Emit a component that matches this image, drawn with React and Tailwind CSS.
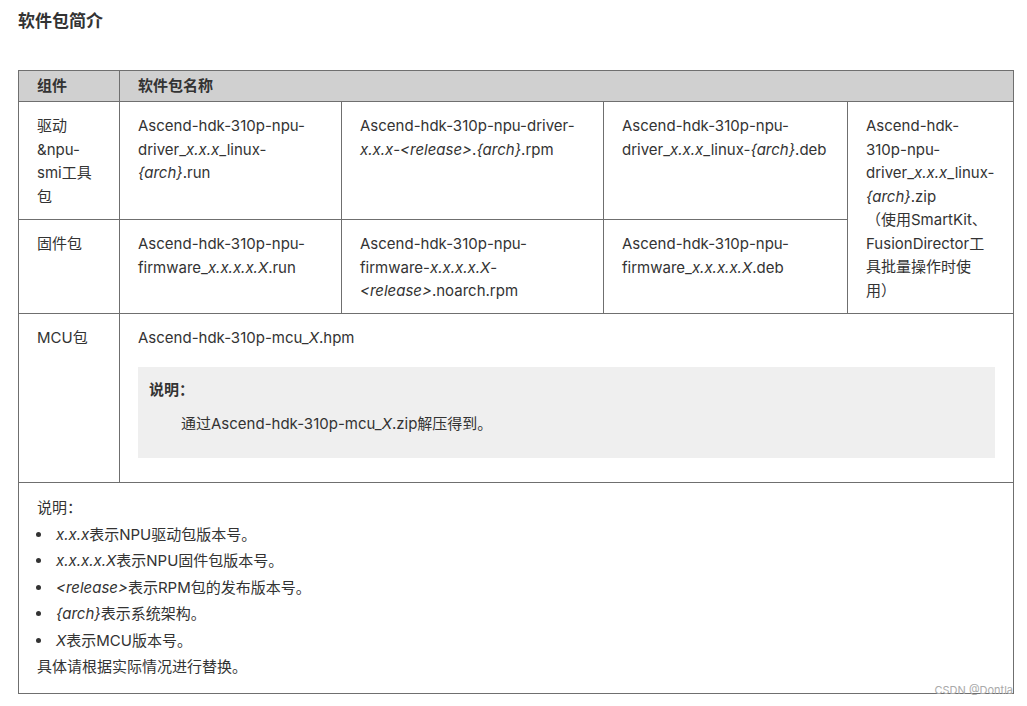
import React from 'react';

const font = { fontFamily: 'Inter, "Noto Sans CJK SC", sans-serif' };

const I = ({ children }) => <i className="italic">{children}</i>;

const Cell = ({ children, className = '', ...rest }) => (
  <td className={`border border-[#6f6f6f] align-top px-[18px] pt-[12px] pb-[10px] ${className}`} {...rest}>
    {children}
  </td>
);

export default function App() {
  return (
    <div className="bg-white w-[1027px] h-[706px] relative text-[#333] text-[15px] leading-[23.5px]" style={font}>
      <h3 className="pl-[18px] pt-[9px] text-[17px] font-bold leading-[24px] text-[#333]">软件包简介</h3>

      <table className="ml-[18px] mt-[37px] w-[995px] table-fixed border-collapse">
        <colgroup>
          <col className="w-[101px]" />
          <col className="w-[222px]" />
          <col className="w-[262px]" />
          <col className="w-[244px]" />
          <col className="w-[166px]" />
        </colgroup>
        <thead>
          <tr className="bg-[#d0d0d0] h-[31px]">
            <th className="border border-[#6f6f6f] px-[18px] text-left font-bold align-middle">组件</th>
            <th colSpan={4} className="border border-[#6f6f6f] px-[18px] text-left font-bold align-middle">软件包名称</th>
          </tr>
        </thead>
        <tbody>
          <tr className="h-[118px]">
            <Cell>驱动<br />&amp;npu-<br />smi工具<br />包</Cell>
            <Cell>Ascend-hdk-310p-npu-<br />driver_<I>x.x.x</I>_linux-<br /><I>{'{arch}'}</I>.run</Cell>
            <Cell>Ascend-hdk-310p-npu-driver-<br /><I>x.x.x</I>-<I>&lt;release&gt;</I>.<I>{'{arch}'}</I>.rpm</Cell>
            <Cell>Ascend-hdk-310p-npu-<br />driver_<I>x.x.x</I>_linux-<I>{'{arch}'}</I>.deb</Cell>
            <Cell rowSpan={2}>
              Ascend-hdk-<br />310p-npu-<br />driver_<I>x.x.x</I>_linux-<br /><I>{'{arch}'}</I>.zip<br />
              （使用SmartKit、<br />FusionDirector工<br />具批量操作时使<br />用）
            </Cell>
          </tr>
          <tr className="h-[94px]">
            <Cell>固件包</Cell>
            <Cell>Ascend-hdk-310p-npu-<br />firmware_<I>x.x.x.x.X</I>.run</Cell>
            <Cell>Ascend-hdk-310p-npu-<br />firmware-<I>x.x.x.x.X</I>-<br /><I>&lt;release&gt;</I>.noarch.rpm</Cell>
            <Cell>Ascend-hdk-310p-npu-<br />firmware_<I>x.x.x.x.X</I>.deb</Cell>
          </tr>
          <tr className="h-[169px]">
            <Cell>MCU包</Cell>
            <Cell colSpan={4}>
              <p>Ascend-hdk-310p-mcu_<I>X</I>.hpm</p>
              <div className="mt-[17px] bg-[#efefef] px-[11px] pt-[11px] pb-[22px]">
                <p className="font-bold">说明：</p>
                <p className="mt-[11px] pl-[32px]">通过Ascend-hdk-310p-mcu_<I>X</I>.zip解压得到。</p>
              </div>
            </Cell>
          </tr>
          <tr className="h-[211px]">
            <td colSpan={5} className="border border-[#6f6f6f] align-top px-[18px] pt-[12px]">
              <p className="leading-[26.5px]">说明：</p>
              <ul className="list-disc pl-[16px] marker:text-[#333] leading-[26.5px]">
                <li className="pl-[3px]"><I>x.x.x</I>表示NPU驱动包版本号。</li>
                <li className="pl-[3px]"><I>x.x.x.x.X</I>表示NPU固件包版本号。</li>
                <li className="pl-[3px]"><I>&lt;release&gt;</I>表示RPM包的发布版本号。</li>
                <li className="pl-[3px]"><I>{'{arch}'}</I>表示系统架构。</li>
                <li className="pl-[3px]"><I>X</I>表示MCU版本号。</li>
              </ul>
              <p className="leading-[26.5px]">具体请根据实际情况进行替换。</p>
            </td>
          </tr>
        </tbody>
      </table>

      <span className="absolute right-[14px] top-[684px] text-[11px] leading-[12px] text-[#aaa]">CSDN @Dontla</span>
    </div>
  );
}
